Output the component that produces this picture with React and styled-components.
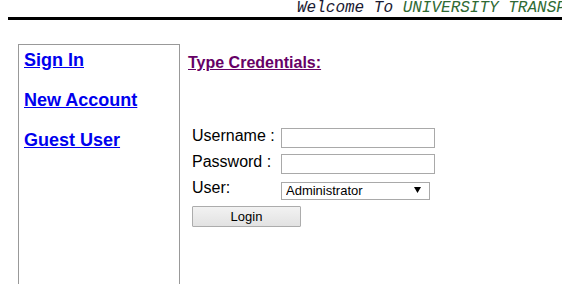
import React from 'react'
import styled, { createGlobalStyle } from 'styled-components'

const GlobalStyle = createGlobalStyle`
  html, body {
    margin: 0;
    padding: 0;
    background: #fff;
    overflow: hidden;
  }
  body {
    font-family: 'Liberation Sans', Arial, sans-serif;
    color: #000;
  }
`

class App extends React.Component {
  render() {
    return (
      <Page>
        <GlobalStyle />
        <Banner>
          {'Welcome To '}
          <Highlight>{'UNIVERSITY TRANSPORT MANAGEMENT SYSTEM'}</Highlight>
        </Banner>
        <Rule />
        <Main>
          <Sidebar>
            <NavLink href="#signin">{'Sign In'}</NavLink>
            <NavLink href="#new">{'New Account'}</NavLink>
            <NavLink href="#guest">{'Guest User'}</NavLink>
          </Sidebar>
          <Content>
            <Heading>{'Type Credentials:'}</Heading>
            <Form onSubmit={e => e.preventDefault()}>
              <Label>{'Username :'}</Label>
              <TextInput type="text" />
              <Label>{'Password :'}</Label>
              <TextInput type="password" />
              <Label>{'User:'}</Label>
              <SelectWrap>
                <Select defaultValue="admin">
                  <option value="admin">Administrator</option>
                  <option value="student">Student</option>
                  <option value="driver">Driver</option>
                </Select>
                <Arrow width="7" height="6" viewBox="0 0 7 6">
                  <polygon points="0,0 7,0 3.5,6" fill="#000" />
                </Arrow>
              </SelectWrap>
              <Button type="submit">{'Login'}</Button>
            </Form>
          </Content>
        </Main>
      </Page>
    )
  }
}

export default App

const Page = styled.div`
  height: 100vh;
  display: flex;
  flex-direction: column;
  overflow: hidden;
`
const Banner = styled.div`
  padding-left: 297px;
  font-family: 'Liberation Mono', 'Courier New', monospace;
  font-style: italic;
  font-size: 16px;
  line-height: 16px;
  white-space: nowrap;
  overflow: hidden;
  color: #1a1a33;
`
const Highlight = styled.span`
  color: #2f6a34;
`
const Rule = styled.div`
  margin: 1px 0 0 8px;
  height: 3px;
  background: #000;
`
const Main = styled.div`
  flex: 1;
  display: flex;
  margin-top: 24px;
  padding-left: 18px;
`
const Sidebar = styled.nav`
  box-sizing: border-box;
  width: 162px;
  border: 1px solid #999;
  border-bottom: none;
  padding: 5px 0 0 5px;
  display: flex;
  flex-direction: column;
  align-items: flex-start;
  gap: 20px;
`
const NavLink = styled.a`
  font-size: 18px;
  line-height: 20px;
  font-weight: bold;
  color: #0000ee;
  text-decoration: underline;
`
const Content = styled.div`
  padding: 10px 0 0 8px;
`
const Heading = styled.a`
  display: inline-block;
  font-size: 16px;
  line-height: 18px;
  font-weight: bold;
  color: #660066;
  text-decoration: underline;
`
const Form = styled.form`
  margin: 53px 0 0 4px;
  display: grid;
  grid-template-columns: 89px auto;
  grid-auto-rows: 26px;
  align-items: center;
  justify-items: start;
`
const Label = styled.label`
  align-self: start;
  padding-top: 2px;
  font-size: 16px;
  line-height: 18px;
  color: #000;
`
const TextInput = styled.input`
  box-sizing: border-box;
  width: 154px;
  height: 20px;
  margin: 0;
  padding: 1px 3px;
  border: 1px solid #a9a9a9;
  background: #fff;
  font-family: 'Liberation Sans', Arial, sans-serif;
  font-size: 13px;
  outline: none;
`
const SelectWrap = styled.div`
  position: relative;
  width: 149px;
  height: 18px;
`
const Select = styled.select`
  appearance: none;
  box-sizing: border-box;
  width: 100%;
  height: 100%;
  margin: 0;
  padding: 0 0 0 4px;
  border: 1px solid #a9a9a9;
  border-radius: 0;
  background: #fff;
  color: #000;
  font-family: 'Liberation Sans', Arial, sans-serif;
  font-size: 13px;
  line-height: 16px;
  outline: none;
`
const Arrow = styled.svg`
  position: absolute;
  right: 9px;
  top: 6px;
  pointer-events: none;
`
const Button = styled.button`
  grid-column: 1 / span 2;
  box-sizing: border-box;
  width: 109px;
  height: 21px;
  margin: 0;
  padding: 0;
  border: 1px solid #acacac;
  border-radius: 1px;
  background: linear-gradient(#f2f2f2, #e2e2e2);
  color: #000;
  font-family: 'Liberation Sans', Arial, sans-serif;
  font-size: 13px;
`
